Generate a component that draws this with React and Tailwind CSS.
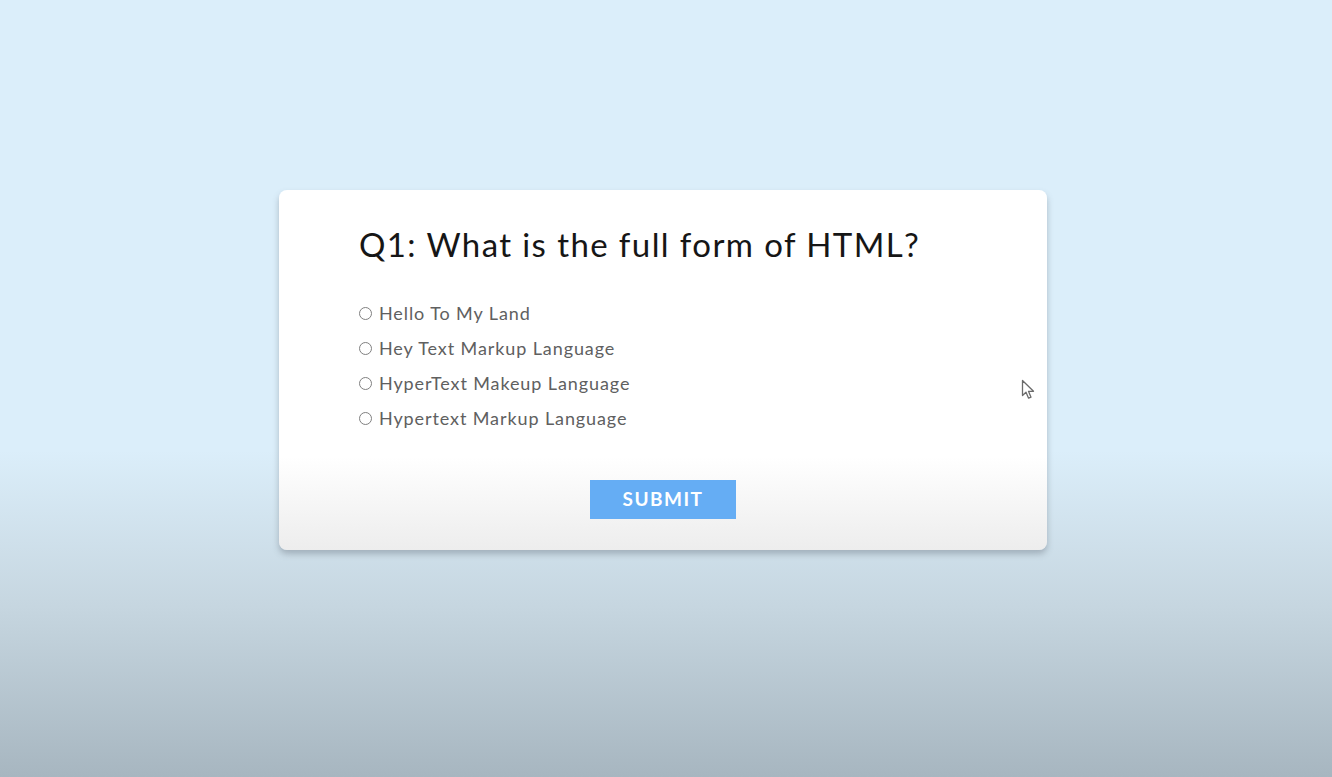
import React, { useState } from 'react';

const options = [
  'Hello To My Land',
  'Hey Text Markup Language',
  'HyperText Makeup Language',
  'Hypertext Markup Language',
];

const Cursor = () => (
  <svg className="absolute left-[1021px] top-[379px]" width="16" height="22" viewBox="0 0 16 22">
    <path d="M1.5 1.5 L1.5 16.5 L5 13.2 L7.6 19.2 L10 18.2 L7.5 12.3 L12.5 12.3 Z" fill="white" stroke="#6b6b6b" strokeWidth="1.3" strokeLinejoin="round" />
  </svg>
);

export default function App() {
  const [picked, setPicked] = useState(null);

  return (
    <div className="relative min-h-[777px] w-full bg-[linear-gradient(to_bottom,#dbeefa_0%,#dbeefa_58%,#c6d6e0_78%,#a7b6c0_100%)] pt-[190px] pl-[279px] font-['Lato',sans-serif]">
      <div className="w-[768px] h-[360px] rounded-lg bg-[linear-gradient(to_bottom,#ffffff_0%,#ffffff_74%,#ededed_100%)] shadow-[0_4px_6px_rgba(80,90,100,0.35)] pl-[80px] pt-[26px]">
        <h1 className="text-[33px] leading-[56px] text-[#161616] tracking-[1.4px]">Q1: What is the full form of HTML?</h1>

        <div className="mt-[30px] flex flex-col gap-[12px]">
          {options.map((o, i) => (
            <label key={o} className="flex items-center gap-[7px] h-[23px] text-[18px] text-[#606060] tracking-[0.9px] cursor-pointer">
              <span className="w-[13px] h-[13px] rounded-full border border-[#808080] flex items-center justify-center">
                {picked === i && <span className="w-[7px] h-[7px] rounded-full bg-[#555555]" />}
              </span>
              <input type="radio" name="q1" className="hidden" onChange={() => setPicked(i)} />
              {o}
            </label>
          ))}
        </div>

        <div className="mt-[50px] flex justify-center pr-[80px]">
          <button className="w-[146px] h-[39px] bg-[#65adf4] text-white text-[19px] font-bold tracking-[1.5px]">SUBMIT</button>
        </div>
      </div>
      <Cursor />
    </div>
  );
}
